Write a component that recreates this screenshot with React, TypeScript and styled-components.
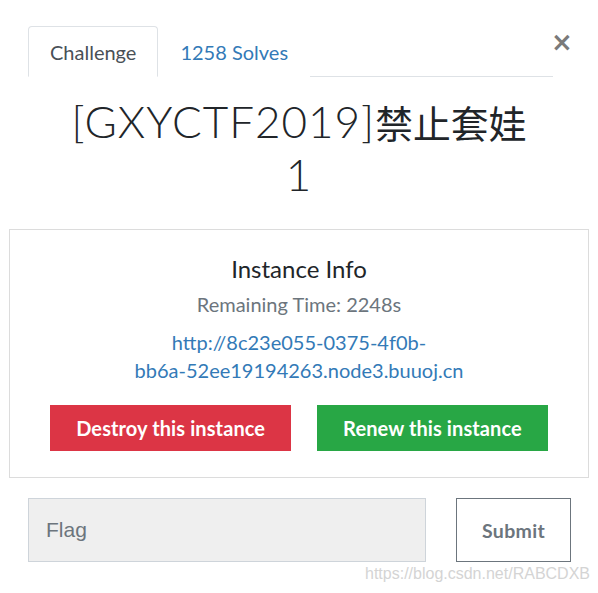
import styled, { createGlobalStyle } from "styled-components";

const GlobalStyle = createGlobalStyle`
  html, body {
    margin: 0;
    padding: 0;
    background: #fff;
  }
  body {
    font-family: Lato, "Noto Sans", sans-serif;
    color: #212529;
  }
`;

function App() {
  const challenge = {
    prefix: "[GXYCTF2019]",
    cjk: "禁止套娃",
    suffix: " 1",
    solves: 1258,
    remaining: 2248,
    urlHead: "http://8c23e055-0375-4f0b-",
    urlTail: "bb6a-52ee19194263.node3.buuoj.cn",
  };
  return (
    <>
      <GlobalStyle />
      <Modal>
        <Header>
          <Tabs>
            <Tab active>Challenge</Tab>
            <Tab>{challenge.solves} Solves</Tab>
          </Tabs>
          <Close>×</Close>
        </Header>
        <Title>
          {challenge.prefix}
          <Cjk>{challenge.cjk}</Cjk>
          {challenge.suffix}
        </Title>
        <InstanceBox>
          <InstanceTitle>Instance Info</InstanceTitle>
          <Remaining>Remaining Time: {challenge.remaining}s</Remaining>
          <InstanceLink href="#">
            {challenge.urlHead}
            <br />
            {challenge.urlTail}
          </InstanceLink>
          <Actions>
            <ActionButton variant="danger">Destroy this instance</ActionButton>
            <ActionButton variant="success">Renew this instance</ActionButton>
          </Actions>
        </InstanceBox>
        <FlagForm>
          <FlagInput placeholder="Flag" />
          <SubmitButton>Submit</SubmitButton>
        </FlagForm>
        <Watermark>https://blog.csdn.net/RABCDXB</Watermark>
      </Modal>
    </>
  );
}
export default App;

const Modal = styled.div`
  width: 598px;
  height: 593px;
  padding-top: 26px;
  box-sizing: border-box;
`;
const Header = styled.div`
  display: flex;
  align-items: flex-start;
  margin-left: 28px;
`;
const Tabs = styled.div`
  width: 525px;
  display: flex;
  border-bottom: 1px solid #dee2e6;
`;
const Tab = styled.div<{ active?: boolean }>`
  display: flex;
  align-items: center;
  box-sizing: border-box;
  height: 51px;
  padding: 1px 21px 0;
  margin-bottom: -1px;
  font-size: 20px;
  border: 1px solid ${(p) => (p.active ? "#dee2e6" : "transparent")};
  border-bottom-color: ${(p) => (p.active ? "#fff" : "transparent")};
  border-radius: 4px 4px 0 0;
  color: ${(p) => (p.active ? "#495057" : "#337ab7")};
  background: #fff;
`;
const Close = styled.div`
  margin: -4px 0 0 -2px;
  font-family: "DejaVu Sans", sans-serif;
  font-size: 26px;
  font-weight: 700;
  line-height: 40px;
  color: #7a7a7a;
`;
const Title = styled.h1`
  width: 470px;
  margin: 18px auto 0;
  text-align: center;
  font-family: Lato, "Noto Sans CJK SC", sans-serif;
  font-size: 44px;
  font-weight: 300;
  letter-spacing: 1px;
  line-height: 1.2;
  color: #212529;
`;
const Cjk = styled.span`
  font-family: "Noto Sans CJK SC", sans-serif;
  font-size: 0.86em;
  font-weight: 400;
  letter-spacing: 0;
`;
const InstanceBox = styled.div`
  margin: 28px 9px 0;
  border: 1px solid #dcdcdc;
  padding: 25px 20px 26px;
  display: flex;
  flex-direction: column;
  align-items: center;
  text-align: center;
`;
const InstanceTitle = styled.h4`
  margin: 0;
  font-size: 24px;
  font-weight: 400;
  line-height: 1.2;
`;
const Remaining = styled.p`
  margin: 6px 0 0;
  font-size: 20px;
  line-height: 30px;
  color: #6c757d;
`;
const InstanceLink = styled.a`
  display: block;
  margin-top: 9px;
  font-size: 20px;
  line-height: 28px;
  color: #337ab7;
  text-decoration: none;
`;
const Actions = styled.div`
  display: flex;
  gap: 26px;
  margin-top: 21px;
`;
const ActionButton = styled.button<{ variant: "danger" | "success" }>`
  height: 46px;
  padding: 0 26px;
  border: none;
  border-radius: 0;
  font-family: Lato, sans-serif;
  font-size: 20px;
  font-weight: 700;
  letter-spacing: 0.1px;
  color: #fff;
  background: ${(p) => (p.variant === "danger" ? "#dc3545" : "#28a745")};
`;
const FlagForm = styled.div`
  display: flex;
  gap: 30px;
  margin: 20px 0 0 28px;
`;
const FlagInput = styled.input`
  width: 398px;
  height: 64px;
  box-sizing: border-box;
  padding: 0 17px;
  border: 1px solid #ced4da;
  background: #efefef;
  font-family: "Liberation Sans", Arial, sans-serif;
  font-size: 21px;
  color: #495057;
  outline: none;
  &::placeholder {
    color: #6c757d;
  }
`;
const SubmitButton = styled.button`
  width: 115px;
  height: 64px;
  border: 1px solid #6c757d;
  background: #fff;
  font-family: Lato, sans-serif;
  font-size: 19.5px;
  font-weight: 700;
  letter-spacing: 0.3px;
  color: #6c757d;
`;
const Watermark = styled.div`
  margin: 3px 8px 0 0;
  text-align: right;
  font-family: "Liberation Sans", Arial, sans-serif;
  font-size: 16px;
  color: #d4d4d4;
`;
